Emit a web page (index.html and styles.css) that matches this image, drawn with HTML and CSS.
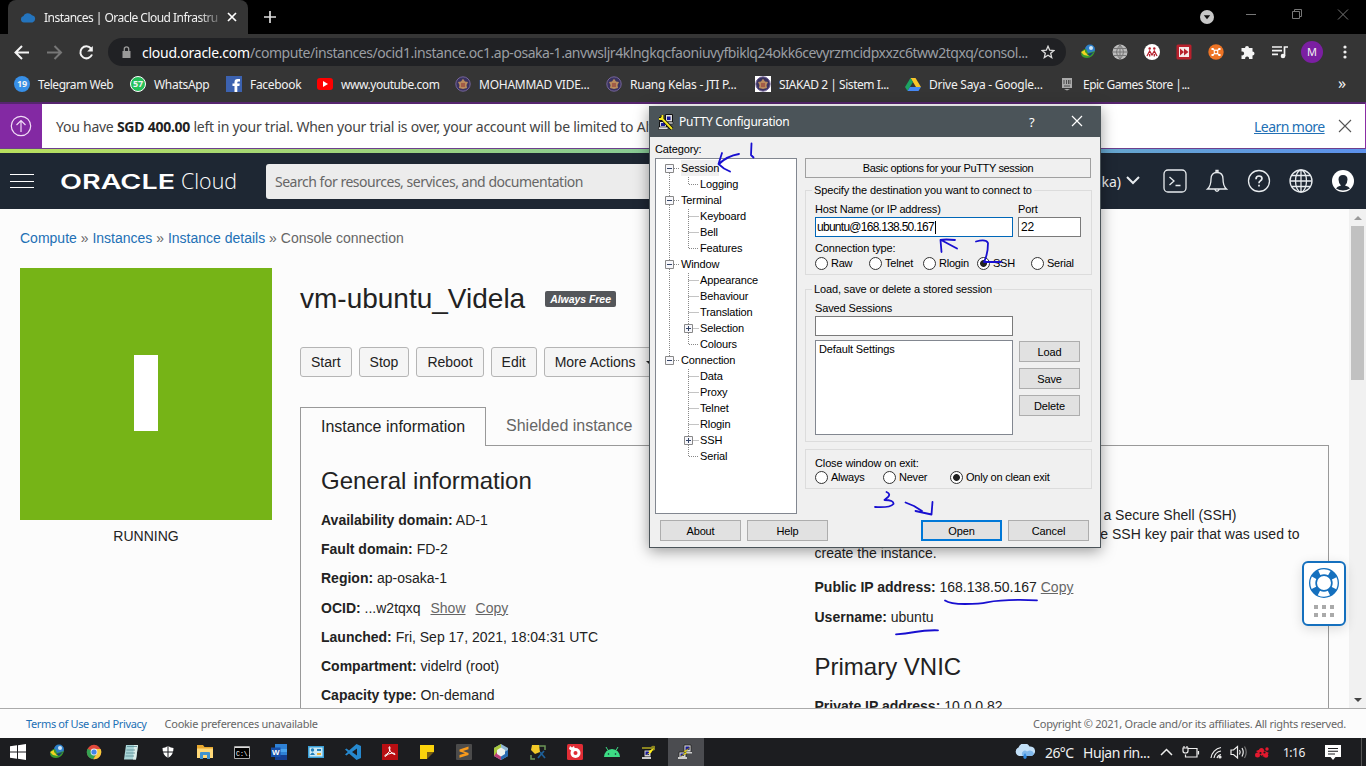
FILE: index.html
```html
<!DOCTYPE html>
<html lang="en">
<head>
<meta charset="utf-8">
<title>Instances | Oracle Cloud Infrastructure</title>
<link rel="stylesheet" href="styles.css">
</head>
<body>
<svg width="0" height="0" class="defs">
  <defs>
    <symbol id="idm" viewBox="0 0 16 16"><circle cx="10" cy="5.5" r="5" fill="#2d7fc8"/><circle cx="11" cy="4" r="2" fill="#cfe6f5"/><path d="M1 10Q2 5 6 5L8 9 15 7Q13 14 7 14Q2 14 1 10Z" fill="#3c9a2e"/><path d="M1 8L5 6 5 8 9 12 4 11Z" fill="#f3d321"/><path d="M7 10L14 8 10 12Z" fill="#173c78"/></symbol>
    <symbol id="crest" viewBox="0 0 16 16"><circle cx="8" cy="8" r="7.200" fill="#3a3360" stroke="#75649a" stroke-width="1"/><path d="M8 2.800L10 5.500 13 6 11.500 9 12 12 8 13 4 12 4.500 9 3 6 6 5.500Z" fill="#b98a5c"/><path d="M6 7H10V11H6Z" fill="#a25c47"/></symbol>
    <symbol id="putty" viewBox="0 0 16 16"><path d="M7 1H14V8H7ZM2 8H9V14H2Z" fill="#d6d6d6" stroke="#222" stroke-width=".8"/><path d="M8.500 2.500H12.500V6H8.500ZM3.500 9.500H7V12H3.500Z" fill="#1a1a9a"/><path d="M1 13H10V15H1ZM9 8H15V9.500H9Z" fill="#ccc"/><path d="M13 3.500L6.500 7.500 8.500 8.500 3.500 12.500 10 9.500 8.500 8Z" fill="#ffef1c" stroke="#5a5200" stroke-width=".4"/></symbol>
  </defs>
</svg>

<header class="browser">
  <div class="tabstrip">
    <div class="tab">
      <svg class="tab-ico" viewBox="0 0 16 11"><path d="M4 10.500A3.300 3.300 0 0 1 3.500 4 5 5 0 0 1 12 3.300 3.700 3.700 0 0 1 12.500 10.500Z" fill="#2474bd"/></svg>
      <span class="tab-title">Instances | Oracle Cloud Infrastru</span>
      <svg class="tab-x" viewBox="0 0 10 10"><path d="M1 1L9 9M9 1L1 9" stroke="#fff" stroke-width="1.700"/></svg>
    </div>
    <svg class="newtab" viewBox="0 0 12 12"><path d="M6 0V12M0 6H12" stroke="#ddd" stroke-width="1.700"/></svg>
    <div class="winbtns">
      <svg width="160" height="34" viewBox="0 0 160 34"><circle cx="11" cy="17" r="7" fill="#c8c8c8"/><path d="M7.800 15.200H14.200L11 19.200Z" fill="#111"/><g stroke="#777" fill="none"><path d="M50 14.500H60M96.500 11.500H103.500V18.500H96.500ZM98.500 11.500V9.500H105.500V16.500H103.500M142 9.500L152 19.500M152 9.500L142 19.500"/></g></svg>
    </div>
  </div>
  <div class="toolbar">
    <svg class="navicons" width="108" height="34" viewBox="0 0 108 34" fill="none" stroke-width="2"><path d="M29 17.500H16.500M22 11L15.500 17.500 22 24" stroke="#f4f4f4"/><path d="M47 17.500H60M54.500 11L61 17.500 54.500 24" stroke="#777"/><path d="M91 13.500A6 6 0 1 0 92 19.500" stroke="#f4f4f4"/><path d="M92.800 11V16.500H87.200Z" fill="#f4f4f4"/></svg>
    <div class="omni">
      <svg class="lock" viewBox="0 0 9 12"><path d="M.5 5H8.500V12H.5Z" fill="#9a9a9a"/><path d="M2.300 5V3A2.200 2.200 0 0 1 6.700 3V5" fill="none" stroke="#9a9a9a" stroke-width="1.300"/></svg>
      <span class="url"><b>cloud.oracle.com</b>/compute/instances/ocid1.instance.oc1.ap-osaka-1.anvwsljr4klngkqcfaoniuvyfbiklq24okk6cevyrzmcidpxxzc6tww2tqxq/consol...</span>
      <svg class="star" viewBox="0 0 14 14"><path d="M7 1.300L8.700 5.200 12.900 5.500 9.700 8.300 10.700 12.500 7 10.200 3.300 12.500 4.300 8.300 1.100 5.500 5.300 5.200Z" fill="none" stroke="#ddd" stroke-width="1.300"/></svg>
    </div>
    <div class="exts">
      <svg viewBox="0 0 16 16"><use href="#idm"/></svg>
      <svg viewBox="0 0 16 16"><circle cx="8" cy="8" r="7.500" fill="#bcbcbc"/><path d="M8 1V15M1 8H15M2 4.500H14M2 11.500H14M8 1Q1 8 8 15Q15 8 8 1" stroke="#777" fill="none"/></svg>
      <svg viewBox="0 0 16 16"><circle cx="8" cy="8" r="8" fill="#fff"/><circle cx="5.700" cy="4.500" r="1.200" fill="#b5202d"/><circle cx="10.300" cy="4.500" r="1.200" fill="#b5202d"/><path d="M3 12L5.700 7 8 11 10.300 7 13 12M5.700 10V12.500M10.300 10V12.500" stroke="#b5202d" stroke-width="1.300" fill="none"/></svg>
      <svg viewBox="0 0 16 16"><rect x=".5" y=".5" width="15" height="15" rx="1.500" fill="#b8202c"/><path d="M3 3H13V13H3Z" fill="#f6e9e9"/><path d="M4 4.500L8 8 4 11.500ZM8 4.500L12.500 8 8 11.500Z" fill="#b8202c"/></svg>
      <svg viewBox="0 0 16 16"><circle cx="8" cy="8" r="7.700" fill="#ee7425"/><path d="M4.500 4.500L11.500 11.500M11.500 4.500L4.500 11.500" stroke="#fff" stroke-width="1.200"/><circle cx="8" cy="8" r="2.400" fill="#fff"/><circle cx="8" cy="8" r="1.300" fill="#ee7425"/><path d="M3.500 4H5.500V6H3.500ZM10.500 4H12.500V6H10.500ZM3.500 10H5.500V12H3.500ZM10.500 10H12.500V12H10.500Z" fill="#fff"/></svg>
      <svg viewBox="0 0 16 16"><path d="M1.500 4H5A2 2 0 1 1 9 4H12.500V7.500A2 2 0 1 1 12.500 11.500V15H9A2 2 0 1 0 5.200 15H1.500V11.300A2 2 0 1 0 1.500 7.500Z" fill="#f4f4f4"/></svg>
      <svg viewBox="0 0 16 16"><path d="M0 3H10M0 6.700H10M0 10.400H6M12.500 12V3H16" stroke="#f4f4f4" stroke-width="1.700" fill="none"/><circle cx="11" cy="12" r="2.300" fill="#f4f4f4"/></svg>
    </div>
    <div class="avatar">M</div>
    <svg class="dots" viewBox="0 0 4 14"><circle cx="2" cy="2" r="1.600" fill="#eee"/><circle cx="2" cy="7" r="1.600" fill="#eee"/><circle cx="2" cy="12" r="1.600" fill="#eee"/></svg>
  </div>
  <nav class="bookmarks">
    <a class="bm w1"><span class="badge blue">19</span><span class="t1">Telegram Web</span></a>
    <a class="bm w2"><span class="badge green">57</span><span class="t2">WhatsApp</span></a>
    <a class="bm w3"><svg viewBox="0 0 16 16"><path d="M0 0H16V16H0Z" fill="#3c62b0"/><path d="M8.500 16V10H6.500V7.500H8.500V6Q8.500 3 11.500 3H14V5.500H12.500Q11.300 5.500 11.300 6.600V7.500H13.800L13.400 10H11.300V16Z" fill="#fff"/></svg><span class="t3">Facebook</span></a>
    <a class="bm w4"><svg viewBox="0 0 16 16"><rect y="2" width="16" height="12" rx="3" fill="#f00"/><path d="M6 5L11 8 6 11Z" fill="#fff"/></svg><span class="t4">www.youtube.com</span></a>
    <a class="bm w5"><svg viewBox="0 0 16 16"><use href="#crest"/></svg><span class="t5">MOHAMMAD VIDE...</span></a>
    <a class="bm w6"><svg viewBox="0 0 16 16"><use href="#crest"/></svg><span class="t6">Ruang Kelas - JTI P...</span></a>
    <a class="bm w7"><svg viewBox="0 0 16 16"><path d="M0 0H16V16H0Z" fill="#fff"/><use href="#crest"/></svg><span class="t7">SIAKAD 2 | Sistem I...</span></a>
    <a class="bm w8"><svg viewBox="0 0 16 16"><path d="M5.500 2H10.500L16 11H11Z" fill="#f9c62b"/><path d="M5.500 2L0 11 2.500 15 8 6Z" fill="#1ca261"/><path d="M5 11H16L13.500 15H2.500Z" fill="#4688f4"/></svg><span class="t8">Drive Saya - Google...</span></a>
    <a class="bm w9"><svg viewBox="0 0 16 16"><path d="M3 2H13V12H3ZM5 13H11L8 14.500Z" fill="#aaa"/><path d="M5 4V8M7.500 4V8M9.500 4V8M11 4V8M5 10H11" stroke="#444" stroke-width=".9"/></svg><span class="t9">Epic Games Store |...</span></a>
    <span class="more">»</span>
  </nav>
</header>

<section class="banner">
  <div class="banner-ico"><svg width="22" height="22" viewBox="0 0 22 22" fill="none" stroke="#f1dcf7" stroke-width="1.200"><circle cx="11" cy="11" r="9.700"/><path d="M11 17V6M6.500 10L11 5.500 15.500 10"/></svg></div>
  <p class="banner-text">You have <b>SGD 400.00</b> left in your trial. When your trial is over, your account will be limited to Alw</p>
  <a class="learn">Learn more</a>
  <svg class="banner-x" viewBox="0 0 14 14"><path d="M1 1L13 13M13 1L1 13" stroke="#555" stroke-width="1.100"/></svg>
</section>
<div class="stripe"></div>

<div class="topnav">
  <svg class="burger" viewBox="0 0 24 14"><path d="M0 .5H24M0 7.500H24M0 13.500H24" stroke="#fff" stroke-width="1"/></svg>
  <svg class="logo" width="180" height="24" viewBox="0 0 180 24" fill="#fff"><text x="0" y="20" class="logo-a" textLength="115" lengthAdjust="spacingAndGlyphs">ORACLE</text><text x="121" y="20" class="logo-b" textLength="56" lengthAdjust="spacingAndGlyphs">Cloud</text></svg>
  <div class="search">Search for resources, services, and documentation</div>
  <div class="region">(Osaka)</div>
  <svg class="navtools" width="240" height="34" viewBox="0 0 240 34" fill="none" stroke="#e8ecef" stroke-width="1.300"><path d="M1 13L7 19 13 13" stroke-width="2"/><rect x="38" y="6" width="22" height="22" rx="4"/><path d="M43.500 13L48 17 43.500 21M49.500 21.500H54.500"/><g transform="translate(12 0)"><path d="M69.500 25Q73 22 73 15Q73 8.500 79 8.500Q85 8.500 85 15Q85 22 88.500 25ZM76.500 25Q79 29.500 81.500 25M78 8V6.500H80V8"/><circle cx="121" cy="17" r="10.500"/><path d="M118 15.200Q118 12 121 12Q124 12 124 14.600Q124 16 122.200 17Q121 17.600 121 19.300M121 20.800V22.500" stroke-width="1.700"/><circle cx="163" cy="17" r="11"/><ellipse cx="163" cy="17" rx="5.500" ry="11"/><path d="M163 6V28M152 17H174M154 11.500H172M154 22.500H172"/><circle cx="205" cy="17" r="11" fill="#fff" stroke="none"/><path d="M198 24.500Q199 22.500 203 21.500Q200.500 19 200.500 15.500Q200.500 11 205 11Q209.500 11 209.500 15.500Q209.500 19 207 21.500Q211 22.500 212 24.500Q205 28.500 198 24.500Z" fill="#1e2733" stroke="none"/></g></svg>
</div>

<main class="page">
  <div class="content">
    <div class="crumbs"><a>Compute</a> » <a>Instances</a> » <a>Instance details</a> » Console connection</div>
    <div class="cols">
      <aside class="status"><div class="tile"><i></i></div><p>RUNNING</p></aside>
      <section class="detail">
        <div class="title"><h1>vm-ubuntu_Videla</h1><span class="free">Always Free</span></div>
        <div class="actions"><button>Start</button><button>Stop</button><button>Reboot</button><button>Edit</button><button class="act-more">More Actions <i></i></button></div>
        <div class="tabs"><span class="t-on">Instance information</span><span class="t-off">Shielded instance</span></div>
        <div class="panel">
          <div class="left">
            <h2>General information</h2>
            <p><b>Availability domain:</b> AD-1</p>
            <p><b>Fault domain:</b> FD-2</p>
            <p><b>Region:</b> ap-osaka-1</p>
            <p><b>OCID:</b> ...w2tqxq <u class="u1">Show</u><u class="u2">Copy</u></p>
            <p><b>Launched:</b> Fri, Sep 17, 2021, 18:04:31 UTC</p>
            <p><b>Compartment:</b> videlrd (root)</p>
            <p><b>Capacity type:</b> On-demand</p>
          </div>
          <div class="right">
            <div class="access"><span class="l1">a Secure Shell (SSH)</span><span class="l2">e SSH key pair that was used to</span><span>create the instance.</span></div>
            <p><b>Public IP address:</b> 168.138.50.167 <u>Copy</u></p>
            <p><b>Username:</b> ubuntu</p>
            <h2>Primary VNIC</h2>
            <p><b>Private IP address:</b> 10.0.0.82</p>
          </div>
        </div>
      </section>
    </div>
  </div>
  <div class="scroll"><i class="up"></i><div class="thumb"></div><i class="down"></i></div>
</main>

<footer class="foot"><a>Terms of Use and Privacy</a><span class="cookie">Cookie preferences unavailable</span><span class="copy">Copyright © 2021, Oracle and/or its affiliates. All rights reserved.</span></footer>

<div class="taskbar">
  <div class="apps">
    <svg viewBox="0 0 16 16"><path d="M0 2.300L7 1.300V7.500H0ZM8 1.200L16 0V7.500H8ZM0 8.500H7V14.700L0 13.700ZM8 8.500H16V16L8 14.800Z" fill="#fff"/></svg>
    <svg viewBox="0 0 16 16"><use href="#idm"/></svg>
    <svg viewBox="0 0 16 16"><circle cx="8" cy="8" r="7.200" fill="#e0483b"/><path d="M8 8L1.600 4.700A7.200 7.200 0 0 0 7.200 15.200L10.500 9.500Z" fill="#35a352"/><path d="M8 5H14.600A7.200 7.200 0 0 1 7.400 15.200L10.800 9.500Z" fill="#f7ca3c"/><circle cx="8" cy="8" r="3.400" fill="#eee"/><circle cx="8" cy="8" r="2.600" fill="#4284e8"/></svg>
    <svg viewBox="0 0 16 16"><path d="M3 1H15L13 15.500H1Z" fill="#a8d4d6"/><path d="M11 1H15L13 15.500H10Z" fill="#dceeea"/><path d="M4 2.500H14M3.500 6H12M3 9H12M2.500 12H11" stroke="#588c94" stroke-width=".8"/></svg>
    <svg viewBox="0 0 16 16"><path d="M8 2Q11 4 13.500 4Q13.500 11.500 8 14Q2.500 11.500 2.500 4Q5 4 8 2Z" fill="#fff"/><path d="M8 2V14M2.500 8H13.500" stroke="#1b1d20" stroke-width="1"/></svg>
    <svg viewBox="0 0 16 16"><path d="M0 1H6L7.500 3H16V14H0Z" fill="#e8a82e"/><path d="M0 4.500H16V14H0Z" fill="#ffd978"/><path d="M3 15V9Q3 8 4 8H12Q13 8 13 9V15H10V11H6V15Z" fill="#3f93cf"/></svg>
    <svg viewBox="0 0 16 16"><path d="M.5 2.500H15.500V14.500H.5Z" fill="#000" stroke="#aaa"/><path d="M1 3.500H15" stroke="#ddd"/><text x="2" y="11.500" class="cmd">C:\.</text></svg>
    <svg viewBox="0 0 16 16"><path d="M4 0H16V16H4Z" fill="#2f82d6"/><path d="M4 5H16V8H4Z" fill="#4aa4ee"/><path d="M4 11H16V16H4Z" fill="#153f91"/><path d="M0 3.500H9.500V13H0Z" fill="#174fa8"/><text x="1" y="11" class="wd">W</text></svg>
    <svg viewBox="0 0 16 16"><path d="M0 2H16V14H0Z" fill="#3aa0d8"/><path d="M1.500 3.500H14.500V12.500H1.500Z" fill="#cdeaf5"/><circle cx="4.500" cy="6" r="1.700" fill="#207eb9"/><path d="M2 11Q4.500 6 7 11ZM9 5H13V7H9Z" fill="#207eb9"/><path d="M9 9H13V11H9Z" fill="#ecaf35"/></svg>
    <svg viewBox="0 0 16 16"><path d="M11.500 0L16 2V14L11.500 16 4 9.500 1.500 11.500 0 10.500 2.800 8 0 5.500 1.500 4.500 4 6.500ZM12 4.500L7 8 12 11.500Z" fill="#2689cf" fill-rule="evenodd"/></svg>
    <svg viewBox="0 0 16 16"><path d="M0 0H16V16H0Z" fill="#b80e12"/><path d="M3 12.500Q1.800 11.500 5 10Q8 8.500 8 4Q8 2 7 3Q6.500 4.500 8.500 7.500Q11 10.500 13 10.500Q13.500 9 10 9Q6 9.500 3 12.500Z" fill="none" stroke="#fff" stroke-width="1"/></svg>
    <svg viewBox="0 0 16 16"><path d="M1 1H15V8H8V15H1Z" fill="#fbd30c"/><path d="M8 15V8H15Z" fill="#775e12"/></svg>
    <svg viewBox="0 0 16 16"><rect width="16" height="16" rx="1" fill="#4b4b4b"/><path d="M3.500 5.500L12.500 2.500V5.200L7 7 12.500 9V11L3.500 13.700V11L9 9.200 3.500 7.500Z" fill="#f79a1c"/></svg>
    <svg viewBox="0 0 16 16"><path d="M8 0L15 4V12L8 16 1 12V4Z" fill="#91b8d3"/><path d="M1 4L8 0V8L1 12Z" fill="#a8c83c"/><path d="M1 12L4 8 8 12V16Z" fill="#bd3e76"/><path d="M8 16V10L15 6V12Z" fill="#286bb0"/><path d="M8 3.500L12 6V10L8 12.500 4 10V6Z" fill="#eef3ed"/></svg>
    <svg viewBox="0 0 16 16"><path d="M2 1H9L10 8 5 10 1 6Z" fill="#f3c928"/><path d="M9 2H15V6M1 11V15H5" fill="none" stroke="#6c9657" stroke-width="1.500"/><path d="M8 14L14 7M10 8L15 14" stroke="#1e5f98" stroke-width="1.700"/></svg>
    <svg viewBox="0 0 16 16"><rect width="16" height="16" rx="1.500" fill="#e02d35"/><circle cx="8.500" cy="9" r="5" fill="#fff"/><circle cx="8.500" cy="9" r="2" fill="#e02d35"/><path d="M3 2L5 3.500 7 2 8 5 5 7 2 5Z" fill="#fff"/></svg>
    <svg viewBox="0 0 16 16"><path d="M0 13Q.7 5.500 8 5Q15.300 5.500 16 13Z" fill="#3ddc84"/><path d="M4 6.500L2 3M12 6.500L14 3" stroke="#3ddc84"/><circle cx="4.500" cy="10" r=".8" fill="#123"/><circle cx="11.500" cy="10" r=".8" fill="#123"/></svg>
    <svg viewBox="0 0 16 16"><path d="M3 6H10V13H3Z" fill="#d6d6d6" stroke="#111"/><path d="M4.500 7.500H8V11H4.500Z" fill="#1a1a9a"/><path d="M1 13H10V15H1Z" fill="#ccc"/><path d="M1 3H10Q11 1 14 2V6L11 7 10 5H1Z" fill="#8b8520"/><path d="M13 4L7 7.500 9 8 5 11 10 9Z" fill="#ffef1c"/></svg>
    <span class="active"><svg viewBox="0 0 16 16"><use href="#putty"/></svg></span>
  </div>
  <svg class="weather" width="22" height="16" viewBox="0 0 22 16"><path d="M5 12A4.500 4.500 0 0 1 4.500 3.500 6 6 0 0 1 15.500 2.500 4.700 4.700 0 0 1 17 12Z" fill="#c3e0f8"/><path d="M9 12A3 3 0 0 1 13 7.500Q18 5 20 9.500Q19 12 17 12Z" fill="#80b8ec"/><path d="M11 9Q7.500 14 11 15Q14.500 14 11 9Z" fill="#3289df"/></svg>
  <span class="temp">26°C</span><span class="cond">Hujan rin...</span>
  <svg class="tray" width="112" height="18" viewBox="0 0 112 18" fill="none" stroke="#eee" stroke-width="1.200"><path d="M1 12L6.500 6.500 12 12" stroke-width="1.500"/><path d="M28 5.500H37V14H25.500V11.500M38.500 8V11.500M23 5H28V8Q28 10 25.500 10Q23 10 23 8ZM24 5V3M27 5V3"/><path d="M51 15A12 12 0 0 1 61 4.500M54 15A8.500 8.500 0 0 1 61 8M57 15A5 5 0 0 1 61 11.500"/><circle cx="60" cy="14" r="1" fill="#eee"/><path d="M71 7H73.500L77.500 3.500V15L73.500 11.500H71ZM79.500 7Q81 9 79.500 11.500M82 5Q84.500 9 82 13.500"/><path d="M84.500 3.500Q88 9 84.500 15" stroke="#777"/><g fill="#e3192e" stroke="none"><circle cx="97.500" cy="12" r="2.500"/><circle cx="101.500" cy="7.500" r="2.500"/><circle cx="106" cy="12.500" r="2.300"/><circle cx="107" cy="6" r="1.700"/><path d="M96 8L101 6 109 10 103 14Z"/></g><g fill="#1c1d20" stroke="none"><circle cx="100.500" cy="10" r="1.100"/><circle cx="104.500" cy="9.500" r="1.100"/><circle cx="102.500" cy="13" r=".8"/></g></svg>
  <span class="clock">1:16</span>
  <svg class="notif" width="16" height="16" viewBox="0 0 16 16"><path d="M0 1H16V13H10.500L8 16 5.500 13H0Z" fill="#fff"/><path d="M3 4.500H13M3 7.200H13M3 10H10" stroke="#1c1d20" stroke-width="1.100"/></svg>
  <i class="desk"></i>
</div>

<div class="help"><svg width="32" height="32" viewBox="0 0 32 32" fill="none"><circle cx="16" cy="16" r="11" stroke="#1570be" stroke-width="8"/><circle cx="16" cy="16" r="11.200" stroke="#fff" stroke-width="5" stroke-dasharray="10.400 7.190" stroke-dashoffset="5.200"/></svg><div class="grid6"><i></i><i></i><i></i><i></i><i></i><i></i></div></div>

<div class="putty">
  <div class="ptitle"><svg class="pico" viewBox="0 0 16 16"><path d="M7.500 .5H14.500V8H7.500ZM1.500 7.500H8.500V14H1.500Z" fill="#ddd" stroke="#111"/><path d="M9 2.500H12.500V6H9ZM3 9H7V12H3Z" fill="#1a1a9a"/><path d="M.5 13H10V15.500H.5ZM10 8H15V10H10Z" fill="#ddd" stroke="#111" stroke-width=".6"/><path d="M3 3.500L14 15M1 5L4.500 5 4.500 1" stroke="#111" stroke-width="3.800" fill="none"/><path d="M3 3.500L14 15M1 5L4.500 5 4.500 1" stroke="#f5e61e" stroke-width="1.900" fill="none"/></svg><span>PuTTY Configuration</span><em>?</em><svg class="px" viewBox="0 0 12 12"><path d="M1 1L11 11M11 1L1 11" stroke="#fff" stroke-width="1.200"/></svg></div>
  <div class="pbody">
    <div class="pcat">
      <div class="lbl">Category:</div>
      <div class="tree">
        <svg class="lines" width="60" height="340" viewBox="0 0 60 340" fill="none" stroke="#888"><path stroke-dasharray="1 1" d="M13.500 14V201M18 9.500H24M18 41.500H24M18 105.500H24M18 201.500H24M32.500 18V25.500H43M32.500 50V89.500H43M32.500 57.500H43M32.500 73.500H43M32.500 114V185.500H43M32.500 121.500H43M32.500 137.500H43M32.500 153.500H43M32.500 169.500H43M32.500 210V297.500H43M32.500 217.500H43M32.500 233.500H43M32.500 249.500H43M32.500 265.500H43M32.500 281.500H43"/><g fill="#f7f7fb"><path d="M9.500 5.500h8v8h-8zM9.500 37.500h8v8h-8zM9.500 101.500h8v8h-8zM9.500 197.500h8v8h-8zM28.500 165.500h8v8h-8zM28.500 277.500h8v8h-8z"/></g><path stroke="#346" d="M11 9.500h5M11 41.500h5M11 105.500h5M11 201.500h5M30 169.500h5M30 281.500h5M32.500 167v5M32.500 279v5"/></svg>
        <ul><li><span class="sel">Session</span></li><li class="c">Logging</li><li>Terminal</li><li class="c">Keyboard</li><li class="c">Bell</li><li class="c">Features</li><li>Window</li><li class="c">Appearance</li><li class="c">Behaviour</li><li class="c">Translation</li><li class="c">Selection</li><li class="c">Colours</li><li>Connection</li><li class="c">Data</li><li class="c">Proxy</li><li class="c">Telnet</li><li class="c">Rlogin</li><li class="c">SSH</li><li class="c">Serial</li></ul>
      </div>
    </div>
    <div class="popts">
      <div class="phead">Basic options for your PuTTY session</div>
      <fieldset class="g1"><legend>Specify the destination you want to connect to</legend>
        <div class="row2"><div class="host"><label>Host Name (or IP address)</label><div class="inp focus">ubuntu@168.138.50.167<i class="caret"></i></div></div><div class="port"><label>Port</label><div class="inp">22</div></div></div>
        <label class="ct">Connection type:</label>
        <div class="radios five"><span><i></i>Raw</span><span><i></i>Telnet</span><span><i></i>Rlogin</span><span><i class="on"></i>SSH</span><span><i></i>Serial</span></div>
      </fieldset>
      <fieldset class="g2"><legend>Load, save or delete a stored session</legend>
        <label>Saved Sessions</label>
        <div class="inp saved"></div>
        <div class="sess"><div class="list">Default Settings</div><div class="sbtns"><button>Load</button><button>Save</button><button>Delete</button></div></div>
      </fieldset>
      <fieldset class="g3"><label>Close window on exit:</label>
        <div class="radios three"><span><i></i>Always</span><span><i></i>Never</span><span><i class="on"></i>Only on clean exit</span></div>
      </fieldset>
    </div>
  </div>
  <div class="pfoot"><button>About</button><button>Help</button><button class="open">Open</button><button class="cancel">Cancel</button></div>
</div>

<svg class="ink" width="1366" height="766" viewBox="0 0 1366 766"><path d="M751.500 143.500L751 155 753.500 157.500M739 154Q727 156 719 164M722 153L718.500 164 724 168.500 730 171.500M957 248.500L942 240.500M955 240Q945 239 940.500 240L941.500 252M976 241.500Q986 238.500 988 243Q988 254 984 262L1001 262M886.500 492Q891 494 888 497L884.500 500Q894 500 893.500 504Q890 508 875 507M905.500 502.500L914 506 922 511M915.500 511L931.500 514.500 932.500 502M945 600.500Q950 604 965 604T987 602.300Q1005 599 1037 600.300M896 634.300Q905 634 915 632T938 630.300"/></svg>
</body>
</html>
```
FILE: styles.css
```css
* { box-sizing: border-box; }
body { margin: 0; width: 1366px; height: 766px; overflow: hidden; position: relative; background: #fcfcfc; font-family: "Liberation Sans", Arial, sans-serif; font-size: 14px; color: #222; display: flex; flex-direction: column; }
body > * { flex: none; }
p, h1, h2, ul { margin: 0; padding: 0; font-weight: normal; }
svg { display: block; flex: none; }
.defs { position: absolute; }

.browser, .banner, .search, .foot, .taskbar, .ptitle, .region { font-family: "Noto Sans", "Open Sans", sans-serif; white-space: nowrap; }
.browser { height: 102px; background: #353535; color: #f2f2f2; font-size: 12px; }
.tabstrip { height: 34px; background: #000; display: flex; padding-left: 8px; }
.tab { width: 240px; height: 34px; background: #353535; border-radius: 8px 8px 0 0; display: flex; align-items: center; padding-left: 12px; }
.tab-ico { width: 16px; height: 11px; margin-right: 8px; }
.tab-title { width: 175px; overflow: hidden; letter-spacing: -.53px; -webkit-mask-image: linear-gradient(90deg, #000 88%, #0003 101%); mask-image: linear-gradient(90deg, #000 88%, #0003 101%); }
.tab-x { width: 10px; height: 10px; margin-left: 8px; }
.newtab { width: 12px; height: 12px; margin: 11px 0 0 16px; }
.winbtns { margin-left: auto; margin-right: 10px; }
.toolbar { height: 36px; display: flex; align-items: center; }
.omni { width: 958px; height: 28px; border-radius: 14px; background: #202124; display: flex; align-items: center; color: #9a9ea3; font-size: 14px; padding-left: 14px; }
.lock { width: 9px; height: 12px; margin-right: 11px; }
.url { width: 899px; letter-spacing: -.45px; }
.url b { font-weight: normal; color: #fff; letter-spacing: -.25px; }
.star { width: 14px; height: 14px; }
.exts { display: flex; gap: 16px; margin-left: 14px; }
.exts svg { width: 16px; height: 16px; }
.avatar { width: 22px; height: 22px; border-radius: 50%; background: #7b1fa2; text-align: center; line-height: 22px; font-size: 11px; margin-left: 13px; }
.dots { width: 4px; height: 14px; margin-left: 20px; }
.bookmarks { display: flex; height: 28px; align-items: center; padding-left: 14px; }
.bm { display: flex; align-items: center; gap: 8px; }
.bm svg, .badge { width: 16px; height: 16px; flex: none; }
.bm span { letter-spacing: -.25px; }
.bm .t1 { letter-spacing: -.45px; } .bm .t9 { letter-spacing: -.52px; }
.bm .t2, .bm .t3 { letter-spacing: -.3px; } .bm .t4, .bm .t7 { letter-spacing: -.45px; }
.bm .badge { border-radius: 50%; text-align: center; font-size: 9px; font-weight: bold; line-height: 16px; }
.blue { background: #378fe7; } .bm .green { background: #25c05a; border: 1px solid #fff; line-height: 13px; }
.w1 { width: 116px; } .w2 { width: 96px; } .w3 { width: 91px; } .w4 { width: 138px; } .w5 { width: 151px; } .w6 { width: 149px; } .w7 { width: 150px; } .w8 { width: 154px; } .w9 { width: 279px; }
.more { font-size: 16px; margin-top: -3px; }

.banner { height: 47px; border-top: 2px solid #56256f; border-bottom: 1px solid #6d3f8d; border-right: 1px solid #8b2da5; background: #fff; display: flex; align-items: center; }
.banner-ico { width: 42px; height: 44px; background: #8329a3; display: grid; place-items: center; }
.banner-text { width: 1198px; padding-left: 14px; font-size: 14px; letter-spacing: -.25px; color: #444; }
.banner-text b { color: #222; }
.learn { color: #2270b5; text-decoration: underline; width: 71px; margin-left: 14px; letter-spacing: -.55px; }
.banner-x { width: 14px; height: 14px; margin-left: 13px; }
.stripe { height: 4px; background: linear-gradient(90deg, #b8df5e, #8acb91 45%, #6bb2bd 70%, #5c91ed); }
.topnav { height: 56px; background: #1e2733; display: flex; align-items: center; }
.burger { width: 24px; height: 14px; margin-left: 10px; }
.logo { margin-left: 26px; margin-right: 26px; }
.logo-a { font: 600 20px Inter, sans-serif; }
.logo-b { font: 300 22px "Open Sans", sans-serif; }
.search { width: 700px; height: 35px; background: #ececec; border-radius: 3px; padding-left: 9px; line-height: 35px; color: #666; letter-spacing: -.48px; margin-top: 1px; }
.region { color: #eee; width: 155px; text-align: right; font-size: 14px; }
.navtools { margin-left: 5px; }

.page { height: 500px; display: flex; overflow: hidden; border-bottom: 1px solid #aaa; }
.content { width: 1349px; padding: 20px 20px 0; }
.crumbs { height: 39px; line-height: 18px; color: #666; }
a { color: #2270b5; }
.browser a { color: inherit; }
.cols { display: flex; gap: 28px; }
.status { width: 252px; text-align: center; }
.tile { width: 252px; height: 252px; background: #76b417; display: grid; place-items: center; padding-bottom: 2px; }
.tile i { width: 24px; height: 76px; background: #fff; }
.status p { margin-top: 8px; line-height: 16px; }
.detail { width: 1029px; }
.title { display: flex; align-items: center; height: 62px; gap: 20px; }
h1 { font-size: 28px; }
.free { background: #54565a; color: #fff; font: italic bold 10.500px "Liberation Sans", sans-serif; border-radius: 2px; padding: 2px 5px; letter-spacing: -.05px; line-height: 12px; }
.actions { display: flex; gap: 7px; margin-top: 17px; height: 30px; }
.actions button { font: 14px "Liberation Sans", sans-serif; color: #222; border: 1px solid #b5b5b5; border-radius: 3px; background: #f5f5f5; padding: 0 10px; }
.act-more i { display: inline-block; border: 3px solid transparent; border-top-color: #222; margin-left: 6px; }
.tabs { display: flex; margin-top: 30px; font-size: 16px; height: 39px; white-space: nowrap; }
.t-on { width: 186px; border: 1px solid #999; border-bottom: 0; padding: 10px 20px; background: #fcfcfc; }
.t-off { flex: 1; border-bottom: 1px solid #999; color: #666; padding: 10px 20px; height: 39px; }
.panel { border: 1px solid #999; border-top: 0; height: 300px; display: flex; padding: 21px 20px 0; }
.left { width: 493.500px; }
h2 { font-size: 24px; line-height: 28px; margin-bottom: 11px; }
.left p { line-height: 17px; height: 29.200px; padding-top: 6px; }
u { color: #666; } .u1 { margin-left: 6px; } .u2 { margin-left: 10px; }
.access { padding-top: 39px; line-height: 19px; width: 485px; display: flex; flex-direction: column; height: 96px; }
.l1 { text-align: right; padding-right: 63px; }
.l2 { text-align: right; }
.right p { margin-top: 16px; line-height: 17px; height: 17px; }
.right p + p { margin-top: 13px; }
.right h2 { margin-top: 27px; margin-bottom: 9px; }
.right h2 + p { margin-top: 17px; }
.scroll { width: 17px; background: #f1f1f1; display: flex; flex-direction: column; align-items: center; }
.scroll i { border: 4px solid transparent; }
.scroll .up { border-bottom-color: #999; margin-top: 3px; }
.scroll .down { border-top-color: #444; margin-top: auto; margin-bottom: 2px; }
.thumb { width: 13px; height: 154px; background: #c1c1c1; margin-top: 6px; }
.foot { height: 29px; display: flex; align-items: center; padding: 0 20px 0 26px; font-size: 11px; color: #666; letter-spacing: -.28px; }
.foot a { color: #2270b5; letter-spacing: -.37px; } .cookie { margin-left: 18px; } .copy { margin-left: auto; }

.taskbar { height: 28px; background: #1c1d20; color: #f0f0f0; display: flex; align-items: center; }
.apps { display: flex; width: 1014px; }
.apps > svg { width: 16px; height: 16px; margin: 6px 11px 6px 10px; }
.apps > svg:first-child { margin-right: 13px; }
.active { background: #4b4c50; width: 36px; height: 28px; padding: 6px 9px; }
.active svg { width: 16px; height: 16px; }
.cmd { font: 6.500px "Liberation Mono", monospace; fill: #fff; }
.wd { font: bold 8px "Liberation Sans", sans-serif; fill: #fff; }
.temp { width: 38px; margin-left: 9px; font-size: 14px; letter-spacing: -.6px; }
.cond { width: 77px; font-size: 14px; letter-spacing: -.45px; }
.clock { width: 32px; margin-left: 11px; font-size: 12px; letter-spacing: -.5px; }
.notif { margin-left: 10px; }
.desk { width: 1px; height: 28px; background: #555; margin-left: 20px; }

.help { position: absolute; left: 1302px; top: 561px; width: 44px; height: 65px; border: 2px solid #1570be; border-radius: 6px; background: #fff; padding: 4px; box-shadow: 0 3px 12px #0002; }
.grid6 { display: grid; grid-template-columns: repeat(3, 4px); gap: 4px; margin: 6px 0 0 6px; }
.help .grid6 { gap: 4px; }
.grid6 i { width: 4px; height: 4px; background: #aaa; }

.putty { position: absolute; left: 649px; top: 106px; width: 452px; height: 442px; background: #f0f0f0; border: 1px solid #4b5459; box-shadow: 0 3px 14px #0006; font-size: 11px; letter-spacing: -.13px; color: #000; }
.ptitle { height: 30px; background: #4b5459; color: #fff; display: flex; align-items: center; font-size: 12px; padding-left: 8px; }
.pico { width: 16px; height: 16px; margin-right: 5px; }
.ptitle span { width: 350px; letter-spacing: -.3px; margin-top: -1px; } .ptitle em { font-style: normal; font-size: 13px; width: 42px; }
.px { width: 12px; height: 12px; margin-top: -2px; }
.pbody { display: flex; gap: 8px; padding: 6px 8px 0 5px; height: 383px; }
.pcat { width: 142px; }
.lbl { height: 15px; line-height: 13px; }
.tree { height: 356px; border: 1px solid #828790; background: #fff; position: relative; padding-top: 1px; }
.lines { position: absolute; left: 0; top: 0; }
ul { list-style: none; position: relative; }
li { height: 16px; line-height: 16px; padding-left: 25px; } li.c { padding-left: 44px; }
.sel { background: #f0f0f0; display: inline-block; height: 16px; }
.popts { width: 287px; padding-top: 15px; }
.phead { height: 20px; width: 286px; border: 1px solid #a0a0a0; text-align: center; line-height: 19px; letter-spacing: -.35px; }
fieldset { border: 1px solid #dcdcdc; margin: 0; padding: 0 0 0 9px; min-width: 0; width: 287px; }
legend { padding: 0 2px; margin-left: -3px; height: 13px; line-height: 13px; }
label { display: block; height: 13px; line-height: 13px; }
.g1 { height: 91px; margin-top: 6px; } .g2 { height: 159px; margin-top: 8px; } .g3 { height: 40px; margin-top: 7px; padding-top: 7px; }
.row2 { display: flex; gap: 5px; margin-top: 6px; }
.host { width: 198px; letter-spacing: -.2px; } .port { width: 63px; }
.inp { border: 1px solid #7a7a7a; background: #fff; height: 20px; margin-top: 1px; padding: 0 2px; font-size: 12px; line-height: 19px; display: flex; align-items: center; }
.focus { border-color: #0067b8; letter-spacing: -.73px; padding-left: 1px; }
.caret { width: 1px; height: 13px; background: #000; margin-left: 1px; }
.ct { margin-top: 5px; }
.radios { display: flex; height: 14px; } .g1 .radios { margin-top: 1px; } .g3 .radios { margin-top: 0; }
.radios span { display: flex; align-items: center; width: 54px; gap: 3px; white-space: nowrap; letter-spacing: -.22px; }
.radios i { width: 13px; height: 13px; flex: none; border: 1px solid #333; border-radius: 50%; background: #fff; }
.radios .on { background: radial-gradient(circle, #222 3px, #fff 3.800px); }
.three span { width: 68px; } .three span:last-child { width: 110px; margin-left: -1px; }
.g2 label { margin-top: 6px; } .saved { width: 198px; }
.sess { display: flex; gap: 6px; margin-top: 4px; }
.list { width: 198px; height: 95px; border: 1px solid #828790; background: #fff; padding: 2px 3px; }
.sbtns { display: flex; flex-direction: column; gap: 6px; padding-top: 1px; }
.putty button { font: 11px "Liberation Sans", sans-serif; letter-spacing: -.13px; border: 1px solid #adadad; background: #e1e1e1; height: 21px; width: 61px; padding: 0; color: #000; }
.pfoot { display: flex; gap: 6px; padding-left: 10px; }
.putty .pfoot button { width: 81px; }
.putty .pfoot .open { border: 2px solid #0078d7; margin-left: 87px; }
.ink { position: absolute; left: 0; top: 0; fill: none; stroke: #180fd0; stroke-width: 1.800; stroke-linecap: round; stroke-linejoin: round; pointer-events: none; }
```
